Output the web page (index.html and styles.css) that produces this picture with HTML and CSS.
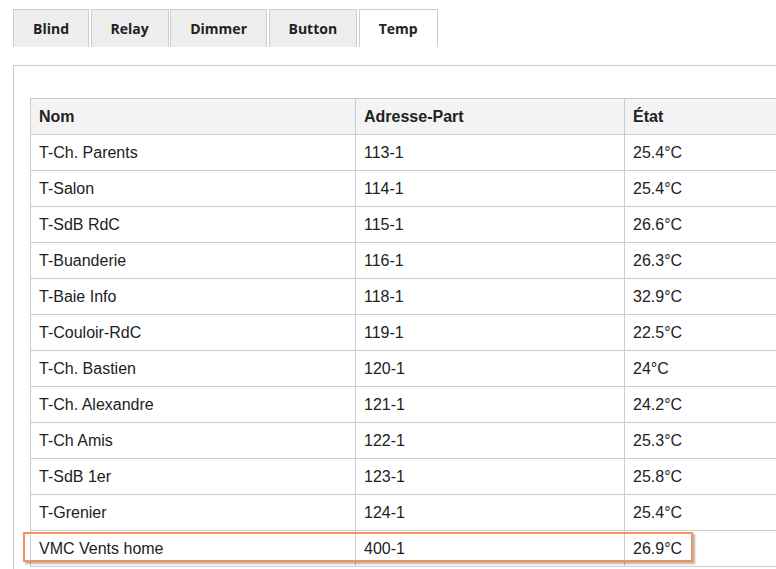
FILE: index.html
```html
<!DOCTYPE html>
<html lang="fr">
<head>
<meta charset="utf-8">
<link rel="stylesheet" href="styles.css">
</head>
<body>
<div class="page">
  <div class="tabs">
    <div class="tab">Blind</div>
    <div class="tab">Relay</div>
    <div class="tab">Dimmer</div>
    <div class="tab">Button</div>
    <div class="tab active">Temp</div>
  </div>
  <div class="panel">
    <table class="grid">
      <colgroup><col class="c1"><col class="c2"><col class="c3"></colgroup>
      <thead>
        <tr><th>Nom</th><th>Adresse-Part</th><th>État</th></tr>
      </thead>
      <tbody>
        <tr><td>T-Ch. Parents</td><td>113-1</td><td>25.4°C</td></tr>
        <tr><td>T-Salon</td><td>114-1</td><td>25.4°C</td></tr>
        <tr><td>T-SdB RdC</td><td>115-1</td><td>26.6°C</td></tr>
        <tr><td>T-Buanderie</td><td>116-1</td><td>26.3°C</td></tr>
        <tr><td>T-Baie Info</td><td>118-1</td><td>32.9°C</td></tr>
        <tr><td>T-Couloir-RdC</td><td>119-1</td><td>22.5°C</td></tr>
        <tr><td>T-Ch. Bastien</td><td>120-1</td><td>24°C</td></tr>
        <tr><td>T-Ch. Alexandre</td><td>121-1</td><td>24.2°C</td></tr>
        <tr><td>T-Ch Amis</td><td>122-1</td><td>25.3°C</td></tr>
        <tr><td>T-SdB 1er</td><td>123-1</td><td>25.8°C</td></tr>
        <tr><td>T-Grenier</td><td>124-1</td><td>25.4°C</td></tr>
        <tr><td>VMC Vents home</td><td>400-1</td><td>26.9°C</td></tr>
      </tbody>
    </table>
  </div>
  <div class="highlight"></div>
</div>
</body>
</html>
```

FILE: styles.css
```css
html, body {
  margin: 0;
  padding: 0;
  overflow: hidden;
  background: #fff;
}
.page {
  position: relative;
  width: 1100px;
  padding: 9px 0 0 13px;
  color: #222;
}
.tabs {
  display: flex;
  gap: 1.5px;
}
.tab {
  box-sizing: border-box;
  height: 38px;
  padding: 0 19px;
  display: flex;
  align-items: center;
  justify-content: center;
  background: #eeeeee;
  border: 1px solid #cccccc;
  border-bottom: none;
  font-family: "Open Sans", "Noto Sans", sans-serif;
  font-weight: 700;
  font-size: 14px;
  color: #222;
}
.tab.active {
  background: #fff;
}
.panel {
  margin-top: 18px;
  border: 1px solid #cccccc;
  padding: 32px 16px 40px 16px;
}
.grid {
  border-collapse: collapse;
  width: 1000px;
  font-family: "Liberation Sans", Arial, sans-serif;
  font-size: 16px;
}
.c1 { width: 325px; }
.c2 { width: 269px; }
.grid th, .grid td {
  border: 1px solid #cccccc;
  height: 36px;
  padding: 0 8px;
  text-align: left;
  vertical-align: middle;
  box-sizing: border-box;
}
.grid th {
  background: #f4f4f4;
  font-weight: 700;
}
.highlight {
  position: absolute;
  left: 23px;
  top: 532px;
  width: 670px;
  height: 30px;
  box-sizing: border-box;
  border: 2px solid #f5925c;
  box-shadow: 2px 2px 2px rgba(0, 0, 0, 0.3);
}
```
